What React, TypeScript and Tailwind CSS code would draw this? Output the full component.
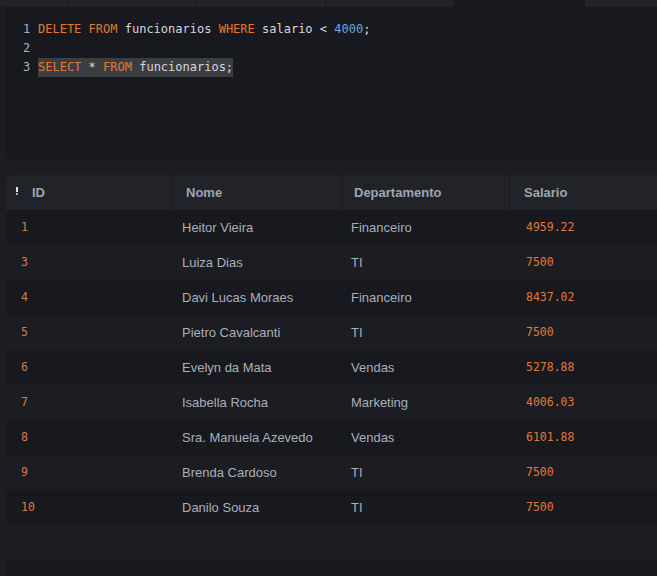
import React from 'react';

type Row = { id: number; nome: string; departamento: string; salario: string };

const ROWS: Row[] = [
  { id: 1, nome: 'Heitor Vieira', departamento: 'Financeiro', salario: '4959.22' },
  { id: 3, nome: 'Luiza Dias', departamento: 'TI', salario: '7500' },
  { id: 4, nome: 'Davi Lucas Moraes', departamento: 'Financeiro', salario: '8437.02' },
  { id: 5, nome: 'Pietro Cavalcanti', departamento: 'TI', salario: '7500' },
  { id: 6, nome: 'Evelyn da Mata', departamento: 'Vendas', salario: '5278.88' },
  { id: 7, nome: 'Isabella Rocha', departamento: 'Marketing', salario: '4006.03' },
  { id: 8, nome: 'Sra. Manuela Azevedo', departamento: 'Vendas', salario: '6101.88' },
  { id: 9, nome: 'Brenda Cardoso', departamento: 'TI', salario: '7500' },
  { id: 10, nome: 'Danilo Souza', departamento: 'TI', salario: '7500' },
];

const mono = "font-['DejaVu_Sans_Mono','Liberation_Mono',monospace]";
const sans = "font-['Liberation_Sans',Arial,sans-serif]";

const Kw: React.FC<{ children: React.ReactNode }> = ({ children }) => (
  <span className="text-[#e5782f]">{children}</span>
);

const App: React.FC = () => {
  return (
    <div className="w-[657px] h-[576px] overflow-hidden bg-[#1c1d22]">
      {/* tab strip (cut off at top) */}
      <div className="flex h-[7px]">
        <div className="w-[68px] bg-[#212328] border-r border-[#17181c]" />
        <div className="w-[129px] bg-[#212328] border-r border-[#17181c]" />
        <div className="w-[129px] bg-[#212328] border-r border-[#17181c]" />
        <div className="w-[129px] bg-[#212328] border-r border-[#17181c]" />
        <div className="w-[129px] bg-[#18191e]" />
        <div className="flex-1 bg-[#212328] border-l border-[#17181c]" />
      </div>

      <div className="pl-[5px]">
        {/* editor */}
        <div className={`h-[153px] bg-[#18191e] rounded-bl-[6px] pt-[13px] pl-[18px] text-[12px] leading-[19px] ${mono} text-[#d6d8db]`}>
          <div className="flex">
            <span className="w-[15px] text-[#a9b1bd]">1</span>
            <span>
              <Kw>DELETE</Kw> <Kw>FROM</Kw> funcionarios <Kw>WHERE</Kw> salario &lt; <span className="text-[#6aa6e0]">4000</span>;
            </span>
          </div>
          <div className="flex">
            <span className="w-[15px] text-[#a9b1bd]">2</span>
          </div>
          <div className="flex">
            <span className="w-[15px] text-[#a9b1bd]">3</span>
            <span className="bg-[#3a3d41]">
              <Kw>SELECT</Kw> * <Kw>FROM</Kw> funcionarios;
            </span>
          </div>
        </div>

        {/* result table */}
        <div className="mt-[15px] ml-px">
          <div className={`grid grid-cols-[167px_170px_167px_1fr] h-[35px] bg-[#212328] rounded-tl-[5px] text-[13px] font-bold text-[#9ca6b3] ${sans}`}>
            <div className="flex items-center border-r border-[#1a1b1f] pl-[10px]">
              <span className="flex flex-col items-center mr-[14px] -mt-[4px]">
                <span className="w-[2px] h-[5px] bg-[#d6e8f8]" />
                <span className="w-[2px] h-[2px] mt-px bg-[#7fb4e6]" />
              </span>
              ID
            </div>
            <div className="flex items-center border-r border-[#1a1b1f] pl-[13px]">Nome</div>
            <div className="flex items-center border-r border-[#1a1b1f] pl-[11px]">Departamento</div>
            <div className="flex items-center pl-[14px]">Salario</div>
          </div>

          {ROWS.map((row, i) => (
            <div
              key={row.id}
              className={`grid grid-cols-[167px_170px_167px_1fr] h-[35px] items-center ${i % 2 === 0 ? 'bg-[#18191e]' : 'bg-[#1c1d22]'}`}
            >
              <span className={`pl-[15px] text-[11.5px] text-[#dd7a3c] ${mono}`}>{row.id}</span>
              <span className={`pl-[9px] text-[13px] text-[#a7afbb] ${sans}`}>{row.nome}</span>
              <span className={`pl-[8px] text-[13px] text-[#a7afbb] ${sans}`}>{row.departamento}</span>
              <span className={`pl-[16px] text-[11.5px] text-[#e0783a] ${mono}`}>{row.salario}</span>
            </div>
          ))}
          <div className="h-[35px] bg-[#1c1d22]" />
          <div className="h-[35px] bg-[#18191e]" />
        </div>
      </div>
    </div>
  );
};

export default App;
